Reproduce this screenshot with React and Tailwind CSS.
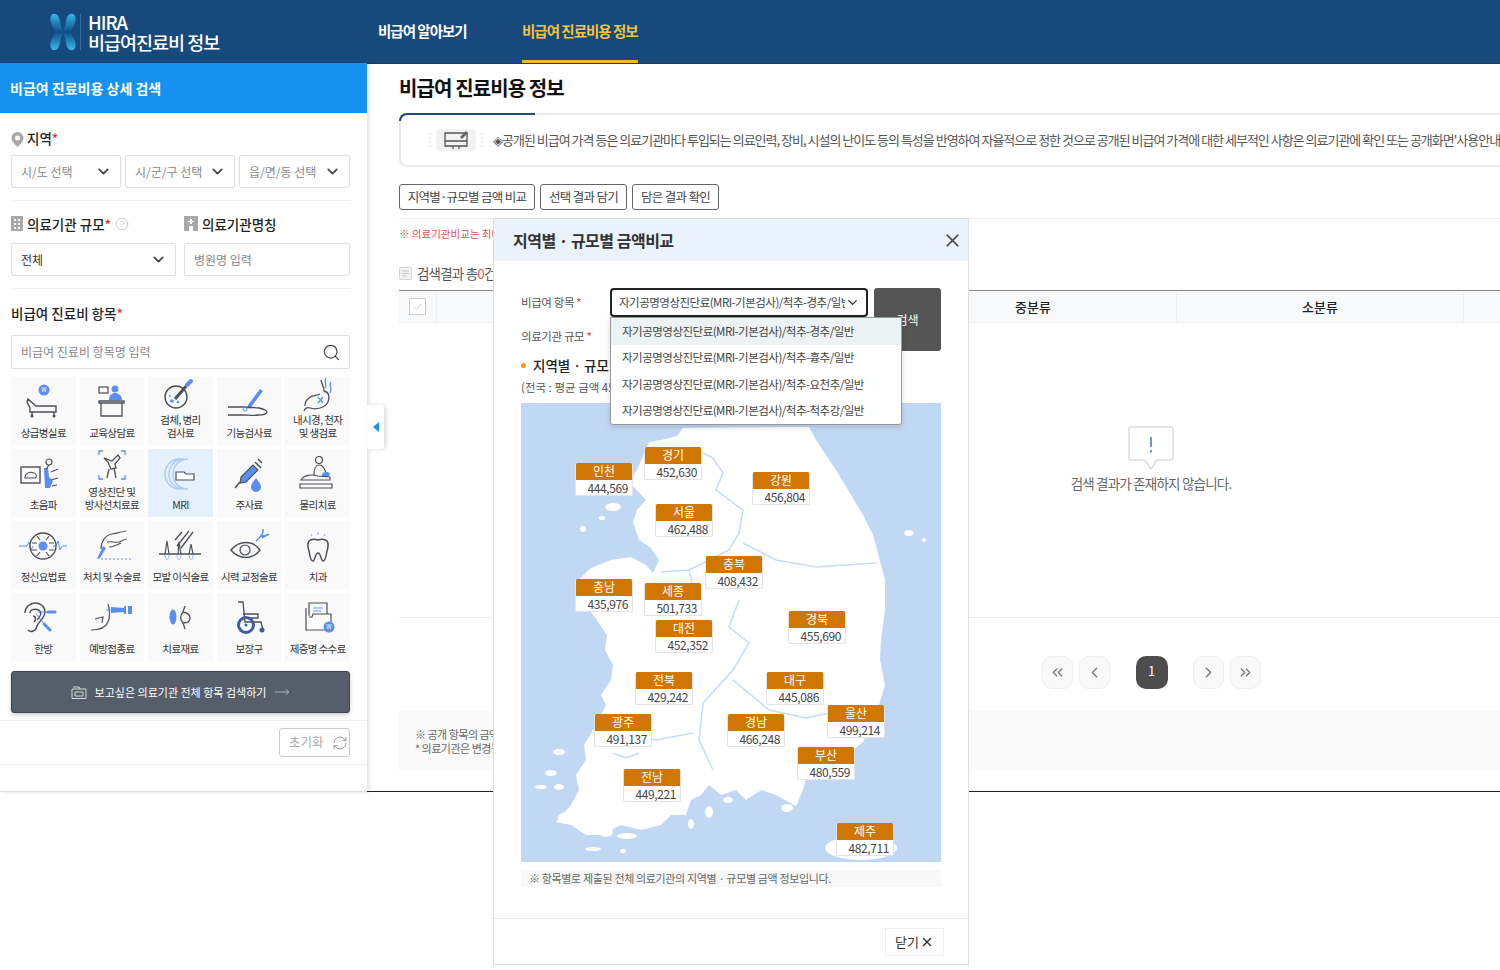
import React from 'react';
import { ChevronDown, ChevronLeft, ChevronRight, ChevronsLeft, ChevronsRight, CircleHelp, MoveRight, RefreshCw, Search, X } from 'lucide-react';

const D = '#4b4f56';
const B = '#5a8ff0';

// 진료비 항목 아이콘 (50x36)
const icons = {
  bed: (
    <>
      <circle cx="26" cy="6" r="5.5" fill={B} />
      <text x="26" y="8" fontSize="6" fill="#fff" textAnchor="middle">W</text>
      <path d="M10 15l8 7h20v6H12v-4l-3-6zM14 28v3M36 28v3" fill="none" stroke={D} strokeWidth="1.4" />
      <circle cx="14" cy="32" r="1.5" fill={D} /><circle cx="36" cy="32" r="1.5" fill={D} />
    </>
  ),
  desk: (
    <>
      <rect x="12" y="3" width="9" height="6" fill="none" stroke={D} strokeWidth="1.2" />
      <circle cx="28" cy="5" r="3.5" fill={B} />
      <path d="M22 16c0-5 3-7 6-7s7 2 7 7z" fill={B} />
      <path d="M12 17h25v2H12zM14 19v13h21V19" fill="none" stroke={D} strokeWidth="1.3" />
    </>
  ),
  sample: (
    <>
      <circle cx="21" cy="20" r="11" fill="none" stroke={D} strokeWidth="1.4" />
      <path d="M20 22L33 7" stroke={D} strokeWidth="3" />
      <path d="M32 8l4-4" stroke={B} strokeWidth="4" strokeLinecap="round" />
      <circle cx="17" cy="24" r="1.8" fill={B} /><circle cx="23" cy="25" r="1.3" fill={B} /><circle cx="15" cy="19" r="1" fill={B} />
    </>
  ),
  arm: (
    <>
      <path d="M24 21L36 5l3 2-12 16-4 1z" fill={B} />
      <path d="M4 23h16c4 1 10 0 15 1 4 1 8 2 8 4s-5 3-9 3c-4 1-10 0-14 0H4" fill="none" stroke={D} strokeWidth="1.3" />
      <circle cx="21" cy="25" r="2" fill="none" stroke={B} strokeWidth="1" />
    </>
  ),
  stomach: (
    <>
      <path d="M28 3c1 5 3 7 3 11 5 1 6 6 4 11-3 6-12 8-18 6-3-1-5 0-6 3M27 17c-3 2-8 1-11 4-3 2-4 5-4 8" fill="none" stroke={D} strokeWidth="1.3" />
      <path d="M33 1c-3 4 2 6-1 10M38 5c-3 4 2 6-1 11M30 20l-5 6M25 20l5 6" fill="none" stroke={B} strokeWidth="1.3" />
    </>
  ),
  ultra: (
    <>
      <rect x="3" y="11" width="19" height="16" fill="none" stroke={D} strokeWidth="1.4" />
      <path d="M7 22c0-5 5-7 9-5 3 1 3 4 1 5z" fill="none" stroke={D} strokeWidth="1.1" />
      <path d="M26 12h4l1 9 4 4-3 7h-5z" fill={B} />
      <circle cx="31" cy="6" r="3" fill="none" stroke={D} strokeWidth="1.2" />
      <path d="M31 9l-3 4M33 16l7-3M33 24l7-2M34 30l5-1" fill="none" stroke={D} strokeWidth="1.2" />
    </>
  ),
  xray: (
    <>
      <path d="M12 6V2h4M34 2h4v4M12 26v4h4M34 30h4v-4" fill="none" stroke={B} strokeWidth="1.3" />
      <path d="M17 9l8 3 6-6 2 3-5 6 1 4-5 1-3-7zM22 20l-2 9M27 19l2 10" fill="none" stroke={D} strokeWidth="1.3" />
    </>
  ),
  mri: (
    <>
      <path d="M25 3C15 3 10 11 10 18s5 15 15 15M29 3C19 3 14 11 14 18s5 15 15 15M33 3c-9 0-15 7-15 15s6 15 15 15" fill="none" stroke="#a9c6f6" strokeWidth="1.3" />
      <path d="M21 16h8l2 2h8v6H21z" fill="#fff" stroke={D} strokeWidth="1.2" />
    </>
  ),
  syringe: (
    <>
      <path d="M17 21l12-12 5 5-12 12-6 1z" fill={B} stroke={D} strokeWidth="1.1" />
      <path d="M16 26l-5 6M31 6l6 6M34 3l4 4" stroke={D} strokeWidth="1.5" fill="none" />
      <path d="M32 22c3 4 5 6 5 9a5 5 0 0 1-10 0c0-3 2-5 5-9z" fill={B} />
    </>
  ),
  therapy: (
    <>
      <circle cx="26" cy="4" r="3.5" fill="none" stroke={D} strokeWidth="1.2" />
      <path d="M21 19c0-6 2-10 5-10s6 3 7 9" fill="none" stroke={D} strokeWidth="1.2" />
      <path d="M29 18c3-3 6-3 8 0l-2 3h-6z" fill={B} />
      <path d="M8 24c3-5 10-6 17-4l12 1v3H8zM7 28h32v4H7z" fill="none" stroke={D} strokeWidth="1.2" />
    </>
  ),
  brain: (
    <>
      <path d="M1 18h8l2-4 2 8 2-4M35 18h3l2-5 2 9 2-4h5" fill="none" stroke={B} strokeWidth="1" />
      <circle cx="25" cy="18" r="13" fill="none" stroke={D} strokeWidth="1.3" />
      <path d="M14 15h5M31 15h5M14 22h5M31 22h5M19 8l3 4M31 8l-3 4M19 28l3-4M31 28l-3-4" stroke={D} strokeWidth="1.1" />
      <circle cx="25" cy="18" r="4.5" fill={B} />
    </>
  ),
  scalpel: (
    <>
      <path d="M14 21c0-7 4-14 11-15 5-1 9-2 14-3M20 14c4-1 8 1 12 0 3-1 6-3 8-3M22 19c4 0 8-2 12-4" fill="none" stroke={D} strokeWidth="1.2" />
      <path d="M16 18l3 2-6 10-3 1z" fill={B} />
      <path d="M14 31h30" stroke={B} strokeWidth="1" strokeDasharray="2 2" />
    </>
  ),
  hair: (
    <>
      <path d="M4 26h42" stroke={D} strokeWidth="1.4" />
      <path d="M10 26l2-13 2 13M34 26l2-10 2 10M23 26l1-12 2 12" fill="none" stroke={D} strokeWidth="1.2" />
      <path d="M22 18L34 3M26 20L38 4M20 12l7-8" stroke={D} strokeWidth="1.3" />
      <path d="M10 27c0 6 4 6 4 0M22 27c0 6 4 6 4 0M34 27c0 6 4 6 4 0" fill="none" stroke="#9dbcf3" strokeWidth="1" />
    </>
  ),
  eye: (
    <>
      <path d="M7 22c8-10 22-10 29 0-7 10-21 10-29 0z" fill="none" stroke={D} strokeWidth="1.4" />
      <circle cx="21" cy="22" r="5" fill="none" stroke={D} strokeWidth="1.2" />
      <path d="M32 13l6-6" stroke={B} strokeWidth="1.5" />
      <path d="M39 1c0 4-1 6-2 7 2 0 5 0 8-2-3 2-6 3-7 4" fill="none" stroke={B} strokeWidth="1.6" />
    </>
  ),
  tooth: (
    <>
      <path d="M16 13c3-3 6-2 9-1 3-1 6-2 9 1 2 3 1 7 0 10-1 4-1 10-4 10-2 0-2-8-5-8s-3 8-5 8c-3 0-3-6-4-10-1-3-2-7 0-10z" fill="none" stroke={D} strokeWidth="1.5" />
      <path d="M18 6l1 2M25 4v3M32 6l-1 2" stroke="#9dbcf3" strokeWidth="1.2" />
    </>
  ),
  ear: (
    <>
      <path d="M10 30c3 3 8 1 9-4 1-4 8-8 8-14 0-6-5-9-10-9S7 7 7 13M12 13c0-4 7-5 10-2 2 3-1 7-3 9M15 16c3 0 3 4 1 6" fill="none" stroke={D} strokeWidth="1.4" />
      <path d="M18 14l10 12" stroke={B} strokeWidth="1" /><path d="M26 24l6 6" stroke={B} strokeWidth="3" strokeLinecap="round" />
      <path d="M20 12h10" stroke={B} strokeWidth="1" /><path d="M30 12h7" stroke={B} strokeWidth="3" strokeLinecap="round" />
    </>
  ),
  vaccine: (
    <>
      <path d="M21 4c2 5 2 14 0 18-2 5-8 8-17 8M8 19l8-2-1 6" fill="none" stroke={D} strokeWidth="1.2" />
      <path d="M19 10h6" stroke={B} strokeWidth="1" />
      <path d="M24 7l13 1v4l-13 1zM37 6h2v8h-2zM41 6h4v8h-4z" fill={B} />
    </>
  ),
  lens: (
    <>
      <ellipse cx="18" cy="17" rx="3.5" ry="7.5" fill={B} />
      <path d="M30 6l-2 6c-3 3-3 8 0 11l2 6M28 12c5 1 7 3 7 6s-2 5-7 5" fill="none" stroke={D} strokeWidth="1.3" />
    </>
  ),
  wheel: (
    <>
      <path d="M14 2h5l2 20h16l2 8M19 14h15v4H20" fill="none" stroke={D} strokeWidth="1.3" />
      <circle cx="22" cy="25" r="7.5" fill="none" stroke="#3c5f9f" strokeWidth="3" />
      <circle cx="22" cy="25" r="1.5" fill="#3c5f9f" />
      <circle cx="38" cy="30" r="2.5" fill="#3c5f9f" />
    </>
  ),
  folder: (
    <>
      <path d="M16 16V3h18v11" fill="none" stroke={D} strokeWidth="1.2" />
      <path d="M20 8h10M20 11h8" stroke="#9dbcf3" strokeWidth="1.3" />
      <path d="M13 8v22h25V14H20l-1 3h-3" fill="#fff" stroke={D} strokeWidth="1.2" />
      <circle cx="36" cy="27" r="5.5" fill={B} />
      <text x="36" y="29" fontSize="6" fill="#fff" textAnchor="middle">W</text>
    </>
  ),
};

const items = [
  { icon: 'bed', label: ['상급병실료'] },
  { icon: 'desk', label: ['교육상담료'] },
  { icon: 'sample', label: ['검체, 병리', '검사료'] },
  { icon: 'arm', label: ['기능검사료'] },
  { icon: 'stomach', label: ['내시경, 천자', '및 생검료'] },
  { icon: 'ultra', label: ['초음파'] },
  { icon: 'xray', label: ['영상진단 및', '방사선치료료'] },
  { icon: 'mri', label: ['MRI'], active: true },
  { icon: 'syringe', label: ['주사료'] },
  { icon: 'therapy', label: ['물리치료'] },
  { icon: 'brain', label: ['정신요법료'] },
  { icon: 'scalpel', label: ['처치 및 수술료'] },
  { icon: 'hair', label: ['모발 이식술료'] },
  { icon: 'eye', label: ['시력 교정술료'] },
  { icon: 'tooth', label: ['치과'] },
  { icon: 'ear', label: ['한방'] },
  { icon: 'vaccine', label: ['예방접종료'] },
  { icon: 'lens', label: ['치료재료'] },
  { icon: 'wheel', label: ['보장구'] },
  { icon: 'folder', label: ['제증명 수수료'] },
];

// 지도 위 지역별 금액
const pins = [
  { name: '인천', value: '444,569', pos: 'left-[54px] top-[60px]' },
  { name: '경기', value: '452,630', pos: 'left-[123px] top-[44px]' },
  { name: '강원', value: '456,804', pos: 'left-[231px] top-[69px]' },
  { name: '서울', value: '462,488', pos: 'left-[134px] top-[101px]' },
  { name: '충북', value: '408,432', pos: 'left-[184px] top-[153px]' },
  { name: '충남', value: '435,976', pos: 'left-[54px] top-[176px]' },
  { name: '세종', value: '501,733', pos: 'left-[123px] top-[180px]' },
  { name: '대전', value: '452,352', pos: 'left-[134px] top-[217px]' },
  { name: '경북', value: '455,690', pos: 'left-[267px] top-[208px]' },
  { name: '전북', value: '429,242', pos: 'left-[114px] top-[269px]' },
  { name: '대구', value: '445,086', pos: 'left-[245px] top-[269px]' },
  { name: '울산', value: '499,214', pos: 'left-[306px] top-[302px]' },
  { name: '광주', value: '491,137', pos: 'left-[73px] top-[311px]' },
  { name: '경남', value: '466,248', pos: 'left-[206px] top-[311px]' },
  { name: '부산', value: '480,559', pos: 'left-[276px] top-[344px]' },
  { name: '전남', value: '449,221', pos: 'left-[102px] top-[366px]' },
  { name: '제주', value: '482,711', pos: 'left-[315px] top-[420px]' },
];

const options = ['경추', '흉추', '요천추', '척추강'];

const Pin = ({ pin }) => (
  <div className={`absolute ${pin.pos} w-[58px] rounded-[2px] overflow-hidden border border-[#e4e4e4] border-t-0 bg-white`}>
    <div className="h-[17px] bg-[#d07602] text-white text-[12px] leading-[16px] text-center">{pin.name}</div>
    <div className="h-[15px] pr-[4px] text-[12px] leading-[15px] text-right text-[#444] tracking-[-0.4px]">{pin.value}</div>
  </div>
);

const KoreaMap = () => (
  <svg viewBox="521 403 418 459" className="absolute inset-0 w-full h-full">
    <path
      fill="#fff"
      d="M648 442L660 440L676 436L682 428L808 427L815 440L825 455L838 475L850 495L862 515L872 535L878 557L884 580L884 610L880 640L879 660L884 685L878 705L870 725L862 742L852 750L840 755L818 765L806 775L802 790L795 806L775 795L760 790L745 800L735 790L720 795L708 785L700 795L690 800L685 815L670 815L660 825L640 830L620 825L600 835L585 835L570 825L555 822L570 805L578 790L575 775L585 760L583 745L595 725L605 705L600 695L610 680L612 665L604 650L606 635L592 615L577 595L575 582L590 568L610 560L630 557L645 565L652 573L658 560L650 548L638 540L632 522L636 510L645 500L628 482L636 470Z"
    />
    <g fill="#fff">
      <ellipse cx="908" cy="533" rx="5" ry="3" />
      <ellipse cx="923" cy="540" rx="2" ry="2" />
      <ellipse cx="860" cy="848" rx="36" ry="12" />
      <ellipse cx="612" cy="507" rx="8" ry="4" />
      <ellipse cx="582" cy="529" rx="3" ry="3" />
      <ellipse cx="601" cy="518" rx="3" ry="2" />
      <ellipse cx="558" cy="752" rx="6" ry="3" />
      <ellipse cx="550" cy="773" rx="6" ry="3" />
      <ellipse cx="558" cy="787" rx="5" ry="3" />
      <ellipse cx="540" cy="787" rx="6" ry="2" />
      <ellipse cx="566" cy="818" rx="9" ry="6" />
      <ellipse cx="605" cy="832" rx="7" ry="5" />
      <ellipse cx="626" cy="836" rx="10" ry="3" />
      <ellipse cx="622" cy="851" rx="3" ry="2" />
      <ellipse cx="592" cy="849" rx="8" ry="2" />
      <ellipse cx="690" cy="824" rx="3" ry="5" />
      <ellipse cx="708" cy="812" rx="4" ry="6" />
      <ellipse cx="727" cy="800" rx="5" ry="3" />
      <ellipse cx="786" cy="808" rx="6" ry="4" />
    </g>
    <path
      fill="none"
      stroke="#c5dbf6"
      strokeWidth="1.5"
      d="M702 453L712 458L722 473L715 490L742 510L738 533L728 550L688 570L695 597M742 543L775 560L815 567L875 563M738 600L728 627L748 643L732 670L702 703L698 740L712 770M732 680L768 710L805 718L828 713M635 735L655 740L692 733M612 753L625 758L638 753M688 570L660 572"
    />
  </svg>
);

const Logo = () => (
  <svg viewBox="0 0 28 38" className="w-[28px] h-[38px]">
    <defs>
      <linearGradient id="logoBlue" x1="0" y1="0" x2="0" y2="1">
        <stop offset="0" stopColor="#37b7e8" />
        <stop offset="0.5" stopColor="#0d4f86" />
        <stop offset="1" stopColor="#3bb9e8" />
      </linearGradient>
    </defs>
    <path d="M4 1c4-1 6 2 7 7 1 5 2 8 3 11-1 3-2 6-3 11-1 5-3 8-7 7-3-1-3-5-2-9s4-6 4-9-3-5-4-9-1-8 2-9z" fill="url(#logoBlue)" />
    <path d="M24 1c-4-1-6 2-7 7-1 5-2 8-3 11 1 3 2 6 3 11 1 5 3 8 7 7 3-1 3-5 2-9s-4-6-4-9 3-5 4-9 1-8-2-9z" fill="url(#logoBlue)" />
  </svg>
);

const SelectBox = ({ label, className = '', dark }) => (
  <div className={`h-[33px] flex items-center justify-between pl-[9px] pr-[8px] border border-[#dedede] rounded-[2px] bg-white text-[12px] ${dark ? 'text-[#333]' : 'text-[#888]'} ${className}`}>
    <span>{label}</span>
    <ChevronDown className="w-[17px] h-[17px] text-[#444]" strokeWidth={2.4} />
  </div>
);

const PageBtn = ({ children, className = '' }) => (
  <div className={`w-[31px] h-[33px] flex items-center justify-center rounded-[10px] border border-[#eeeeee] bg-[#f9f9f9] text-[#777] ${className}`}>
    {children}
  </div>
);

const Sidebar = () => (
  <aside className="relative z-10 w-[367px] h-[729px] shrink-0 bg-white border-b border-[#dddddd] shadow-[2px_0_4px_rgba(0,0,0,0.12)]">
    <div className="h-[50px] flex items-center pl-[10px] bg-[#1592f0] text-white text-[14px] font-bold">비급여 진료비용 상세 검색</div>

    <div className="pl-[11px] pr-[17px]">
      <div className="h-[42px] flex items-end pb-[7px] gap-[3px] text-[13.5px] font-medium text-[#222]">
        <svg viewBox="0 0 12 15" className="w-[13px] h-[15px] mb-[1px]">
          <path d="M6 0a6 6 0 0 1 6 6c0 3-3 6-6 9-3-3-6-6-6-9a6 6 0 0 1 6-6z" fill="#a8a8a8" />
          <circle cx="6" cy="6" r="2.5" fill="#fff" />
        </svg>
        <span>지역<span className="text-[#e0343c]">*</span></span>
      </div>
      <div className="flex gap-[4px]">
        <SelectBox label="시/도 선택" className="w-[110px]" />
        <SelectBox label="시/군/구 선택" className="w-[110px]" />
        <SelectBox label="읍/면/동 선택" className="w-[111px]" />
      </div>
      <div className="mt-[12px] border-t border-[#eeeeee]" />

      <div className="flex h-[42px] items-end pb-[9px] text-[13.5px] font-medium text-[#222]">
        <div className="w-[173px] flex items-center gap-[4px]">
          <svg viewBox="0 0 12 15" className="w-[12px] h-[15px]">
            <path d="M0 0h12v15H0z" fill="#a8a8a8" />
            <path d="M3 3h2v2H3zM7 3h2v2H7zM3 7h2v2H3zM7 7h2v2H7zM3 11h2v2H3zM7 11h2v2H7z" fill="#fff" />
          </svg>
          <span>의료기관 규모<span className="text-[#e0343c]">*</span></span>
          <CircleHelp className="w-[14px] h-[14px] text-[#c4c4c4]" strokeWidth={1.5} />
        </div>
        <div className="flex items-center gap-[4px]">
          <svg viewBox="0 0 14 15" className="w-[14px] h-[15px]">
            <path d="M0 0h14v15H9v-5H5v5H0z" fill="#a8a8a8" />
            <path d="M6 3h2v2h2v1H8v2H6V6H4V5h2z" fill="#fff" />
          </svg>
          <span>의료기관명칭</span>
        </div>
      </div>
      <div className="flex gap-[8px]">
        <SelectBox label="전체" dark className="w-[165px]" />
        <div className="w-[166px] h-[33px] flex items-center pl-[9px] border border-[#dedede] rounded-[2px] text-[12px] text-[#888]">병원명 입력</div>
      </div>
      <div className="mt-[12px] border-t border-[#eeeeee]" />

      <div className="h-[46px] flex items-end pb-[12px] text-[13.5px] font-medium text-[#222]">
        비급여 진료비 항목<span className="text-[#e0343c]">*</span>
      </div>
      <div className="h-[34px] flex items-center justify-between pl-[9px] pr-[8px] border border-[#dedede] rounded-[2px] text-[12px] text-[#888]">
        <span>비급여 진료비 항목명 입력</span>
        <Search className="w-[19px] h-[19px] text-[#444]" strokeWidth={1.5} />
      </div>

      <div className="mt-[8px] grid grid-cols-5 gap-[4px]">
        {items.map((item) => (
          <div key={item.icon} className={`h-[68px] flex flex-col items-center pb-[6px] ${item.active ? 'bg-[#e5f0fd]' : 'bg-[#f9f9f9]'}`}>
            <div className="flex-1 flex items-center justify-center">
              <svg viewBox="0 0 50 36" className="w-[50px] h-[36px]">{icons[item.icon]}</svg>
            </div>
            {item.label.map((line) => (
              <div key={line} className="text-[10.5px] leading-[13px] text-[#333] whitespace-nowrap tracking-[-0.6px]">{line}</div>
            ))}
          </div>
        ))}
      </div>

      <div className="mt-[10px] h-[42px] flex items-center justify-center gap-[7px] rounded-[3px] border border-[#3f4650] bg-[#565e6b] text-white text-[11px] shadow-[0_2px_4px_rgba(0,0,0,0.2)]">
        <svg viewBox="0 0 16 13" className="w-[16px] h-[13px] mr-[1px]" fill="none" stroke="#d5d8dc" strokeWidth="1">
          <path d="M1 3h14v9.5H1zM2 1h6l1 2M4 6h8v4H4z" />
        </svg>
        <span>보고싶은 의료기관 전체 항목 검색하기</span>
        <MoveRight className="w-[16px] h-[16px] ml-[1px] text-[#d5d8dc]" strokeWidth={1} />
      </div>
    </div>

    <div className="mt-[7px] border-t border-[#eeeeee] h-[45px] border-b flex items-center justify-end pr-[17px]">
      <div className="w-[71px] h-[29px] flex items-center justify-between pl-[9px] pr-[1px] border border-[#c9c9c9] rounded-[3px] text-[12.5px] text-[#aaaaaa]">
        <span>초기화</span>
        <RefreshCw className="w-[16px] h-[16px] text-[#777]" strokeWidth={1.1} />
      </div>
    </div>
  </aside>
);

const Main = () => (
  <main className="relative flex-1 h-[728px] pl-[32px] border-b border-[#222222] overflow-hidden">
    <h1 className="h-[48px] flex items-center text-[20px] font-bold text-[#111] tracking-[-0.9px]">비급여 진료비용 정보</h1>

    <div className="relative mt-[1px] w-[1504px] h-[54px] flex items-center pl-[28px] gap-[10px] border-2 border-r-0 border-[#e8ebed] rounded-l-[8px] text-[13px] text-[#555] tracking-[-1px] whitespace-nowrap">
      <span className="absolute -left-[2px] -top-[2px] w-[136px] h-[8px] border-t-2 border-l-2 border-[#1d4a7c] rounded-tl-[8px]" />
      <svg viewBox="0 0 54 22" className="w-[54px] h-[22px] shrink-0">
        <rect x="7" y="0" width="40" height="22" rx="4" fill="#f2f2f2" />
        <path d="M1 4v14M53 4v14" stroke="#dddddd" strokeDasharray="2 2" />
        <path d="M16 4h22v13H16zM16 12h22M24 17v3M30 17v3" fill="none" stroke="#555" strokeWidth="1.3" />
        <path d="M31 8l6-6 2 2-6 6z" fill="#666" />
      </svg>
      <span>◈공개된 비급여 가격 등은 의료기관마다 투입되는 의료인력, 장비, 시설의 난이도 등의 특성을 반영하여 자율적으로 정한 것으로 공개된 비급여 가격에 대한 세부적인 사항은 의료기관에 확인 또는 공개화면'사용안내'를 참고하시기 바랍니다.</span>
    </div>

    <div className="mt-[17px] flex gap-[5px] text-[12.5px] text-[#444] tracking-[-0.7px]">
      <div className="w-[136px] h-[26px] flex items-center justify-center border border-[#666] rounded-[3px]">지역별·규모별 금액 비교</div>
      <div className="w-[87px] h-[26px] flex items-center justify-center border border-[#666] rounded-[3px]">선택 결과 담기</div>
      <div className="w-[87px] h-[26px] flex items-center justify-center border border-[#666] rounded-[3px]">담은 결과 확인</div>
    </div>

    <div className="mt-[8px] w-[1504px] border-t border-[#eeeeee]" />
    <div className="mt-[7px] h-[16px] text-[10.5px] leading-[16px] text-[#d9534f]">※ 의료기관비교는 최대 5개까지 가능합니다.</div>

    <div className="mt-[21px] h-[20px] flex items-center gap-[5px] text-[13.5px] text-[#555] tracking-[-0.8px]">
      <svg viewBox="0 0 13 13" className="w-[13px] h-[13px]">
        <rect x="0.5" y="0.5" width="12" height="12" rx="1.5" fill="#f3f3f3" stroke="#d5d5d5" />
        <path d="M3 4h7M3 6.5h7M3 9h5" stroke="#c4c4c4" />
      </svg>
      <span>검색결과 총<span className="text-[#e8504d]">0</span>건</span>
    </div>

    <div className="mt-[7px] w-[1504px]">
      <div className="h-[33px] flex items-center bg-[#f8f9fa] border-t border-[#888888] border-b-[#eeeeee] border-b text-[13px] font-medium text-[#222]">
        <div className="w-[38px] h-full flex items-center justify-center border-r border-[#eeeeee]">
          <div className="w-[17px] h-[17px] flex items-center justify-center border border-[#cccccc] bg-white">
            <svg viewBox="0 0 12 12" className="w-[11px] h-[11px]"><path d="M2 6l3 3 5-6" fill="none" stroke="#cccccc" /></svg>
          </div>
        </div>
        <div className="w-[453px] h-full" />
        <div className="w-[287px] h-full flex items-center justify-center border-r border-[#eeeeee]">중분류</div>
        <div className="w-[287px] h-full flex items-center justify-center border-r border-[#eeeeee]">소분류</div>
      </div>
      <div className="h-[295px] flex flex-col items-center pt-[103px] border-b border-[#eeeeee]">
        <svg viewBox="0 0 46 44" className="w-[46px] h-[44px]">
          <path d="M3 1h40a2 2 0 0 1 2 2v29a2 2 0 0 1-2 2H29l-6 9-6-9H3a2 2 0 0 1-2-2V3a2 2 0 0 1 2-2z" fill="#fff" stroke="#dddddd" strokeWidth="1.5" />
          <path d="M23 11v10M23 24v2.5" stroke="#5b8dc0" strokeWidth="1.8" />
        </svg>
        <div className="mt-[3px] text-[13.5px] text-[#666] tracking-[-0.8px]">검색 결과가 존재하지 않습니다.</div>
      </div>

      <div className="mt-[38px] flex items-center justify-center">
        <PageBtn><ChevronsLeft className="w-[17px] h-[17px]" strokeWidth={1.7} /></PageBtn>
        <PageBtn className="ml-[6px]"><ChevronLeft className="w-[17px] h-[17px]" strokeWidth={1.9} /></PageBtn>
        <div className="ml-[26px] w-[32px] h-[33px] flex items-center justify-center rounded-[10px] bg-[#4d4d4d] text-white text-[13px] pb-[3px]">1</div>
        <PageBtn className="ml-[25px]"><ChevronRight className="w-[17px] h-[17px]" strokeWidth={1.9} /></PageBtn>
        <PageBtn className="ml-[6px]"><ChevronsRight className="w-[17px] h-[17px]" strokeWidth={1.7} /></PageBtn>
      </div>

      <div className="mt-[22px] h-[59px] flex flex-col justify-center pl-[16px] bg-[#fafafa] text-[11px] leading-[14px] text-[#666] tracking-[-0.5px] whitespace-nowrap">
        <div>※ 공개 항목의 금액은 의료기관이 제출한 자료를 바탕으로 산출된 금액으로, 실제 진료비와는 다소 차이가 있음을 알려드립니다.</div>
        <div>* 의료기관은 변경될 수 있습니다.</div>
      </div>
    </div>
  </main>
);

const CompareModal = () => (
  <div className="absolute z-20 left-[493px] top-[218px] w-[476px] h-[747px] flex flex-col border border-[#dddddd] bg-white">
    <div className="h-[42px] shrink-0 flex items-center justify-between pl-[19px] pr-[5px] bg-[#eaf2fc]">
      <span className="text-[16px] font-bold text-[#333] tracking-[-0.5px]">지역별 · 규모별 금액비교</span>
      <X className="w-[21px] h-[21px] text-[#444]" strokeWidth={2} />
    </div>

    <div className="px-[27px] pt-[27px]">
      <div className="flex justify-between">
        <div className="text-[11.5px] text-[#555] tracking-[-0.4px]">
          <div className="h-[29px] flex items-center">
            <span className="w-[89px]">비급여 항목 <span className="text-[#e0343c]">*</span></span>
            <div className="w-[258px] h-[29px] flex items-center pl-[7px] pr-[6px] border-2 border-[#222] rounded-[4px] bg-white text-[#444] tracking-[-0.5px]">
              <span className="flex-1 overflow-hidden whitespace-nowrap">자기공명영상진단료(MRI-기본검사)/척추-경추/일반</span>
              <ChevronDown className="w-[15px] h-[15px] shrink-0 text-[#333]" strokeWidth={2.2} />
            </div>
          </div>
          <div className="mt-[5px] h-[29px] flex items-center">
            <span className="w-[89px]">의료기관 규모 <span className="text-[#e0343c]">*</span></span>
          </div>
        </div>
        <div className="w-[67px] h-[63px] flex items-center justify-center rounded-[3px] bg-[#555555] text-white text-[12px]">검색</div>
      </div>

      <div className="mt-[4px] h-[20px] flex items-center gap-[7px] text-[13.5px] font-medium text-[#222]">
        <span className="w-[5px] h-[5px] rounded-full bg-[#f59a1c]" />
        <span>지역별 · 규모별 금액비교</span>
      </div>
      <div className="mt-[4px] h-[16px] text-[11.5px] leading-[16px] text-[#555]">(전국 : 평균 금액 452,630원)</div>

      <div className="relative mt-[8px] h-[459px] bg-[#c1d8f4] overflow-hidden">
        <KoreaMap />
        {pins.map((pin) => <Pin key={pin.name} pin={pin} />)}
      </div>

      <div className="mt-[8px] h-[17px] flex items-center pl-[8px] bg-[#f8f8f8] text-[11px] text-[#666] tracking-[-0.35px]">
        ※ 항목별로 제출된 전체 의료기관의 지역별 · 규모별 금액 정보입니다.
      </div>
    </div>

    <div className="mt-auto h-[46px] flex items-center justify-end pr-[24px] border-t border-[#e5e5e5]">
      <div className="w-[59px] h-[28px] flex items-center justify-center gap-[1px] border border-[#eeeeee] text-[13px] text-[#333]">
        닫기<X className="w-[14px] h-[14px]" strokeWidth={2.4} />
      </div>
    </div>

    <div className="absolute left-[116px] top-[98px] w-[292px] h-[108px] flex flex-col border border-[#999999] rounded-b-[3px] bg-white shadow-[0_2px_6px_rgba(0,0,0,0.15)] text-[11.5px] text-[#444] tracking-[-0.5px]">
      {options.map((opt, i) => (
        <div key={opt} className={`flex-1 flex items-center pl-[11px] ${i === 0 ? 'bg-[#ecf3f5]' : ''}`}>
          자기공명영상진단료(MRI-기본검사)/척추-{opt}/일반
        </div>
      ))}
    </div>
  </div>
);

const App = () => (
  <div className="relative w-[1500px] h-[970px] overflow-hidden bg-white font-['Noto_Sans_CJK_KR','Noto_Sans',sans-serif]">
    <header className="h-[63px] flex bg-[#17497d] text-white">
      <div className="w-[378px] flex items-center pl-[49px]">
        <Logo />
        <div className="ml-[3px] w-px h-[36px] bg-[#3a6a99]" />
        <div className="ml-[7px] text-[18.5px] leading-[20px] font-medium tracking-[-1px]">
          <div>HIRA</div>
          <div>비급여진료비 정보</div>
        </div>
      </div>
      <nav className="flex text-[14.5px] font-bold tracking-[-1px]">
        <div className="w-[144px] flex items-center pb-[2px]">비급여 알아보기</div>
        <div className="h-[63px] flex items-center pb-[2px] pt-[3px] text-[#f5c33c] border-b-[3px] border-[#f0b92c]">비급여 진료비용 정보</div>
      </nav>
    </header>

    <div className="flex">
      <Sidebar />
      <div className="flex-1 min-w-0 border-t border-[#2a3a4a]">
        <Main />
      </div>
    </div>

    <div className="absolute z-10 left-[367px] top-[405px] w-[17px] h-[44px] flex items-center justify-center bg-white rounded-r-[3px] shadow-[2px_0_4px_rgba(0,0,0,0.15)]">
      <svg viewBox="0 0 6 10" className="w-[6px] h-[10px]"><path d="M6 0v10L0 5z" fill="#1592f0" /></svg>
    </div>

    <CompareModal />
  </div>
);

export default App;
